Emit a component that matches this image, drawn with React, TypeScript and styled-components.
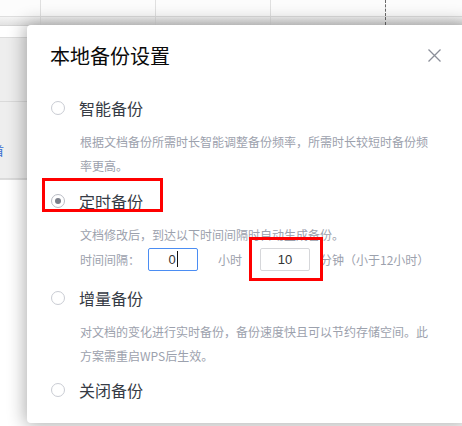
import React from "react";
import styled, { createGlobalStyle } from "styled-components";

const Global = createGlobalStyle`
  html, body { margin: 0; padding: 0; background: #ffffff; overflow: hidden; }
  body { font-family: "Noto Sans CJK SC", "Noto Sans", "Liberation Sans", sans-serif; }
  * { box-sizing: border-box; }
`;

const Page = styled.div`
  position: relative;
  width: 462px;
  height: 426px;
  overflow: hidden;
  background: #ffffff;
`;

/* ---------- spreadsheet behind ---------- */
const Sheet = styled.div`
  display: flex;
  flex-direction: column;
  width: 100%;
  height: 100%;
`;

const GridRow = styled.div<{ $h: number; $band?: boolean }>`
  display: grid;
  grid-template-columns: 41px 115px 115px 115px 1fr;
  height: ${(p) => p.$h}px;
  background: ${(p) => (p.$band ? "linear-gradient(#f4f4f4, #e2e2e2)" : "#fcfcfc")};
  border-bottom: 1px solid ${(p) => (p.$band ? "#d4d4d4" : "#dedede")};
`;

const GridCell = styled.div<{ $dashed?: boolean }>`
  border-right: 1px ${(p) => (p.$dashed ? "dashed #6a6a6a" : "solid #e0e0e0")};
`;

const SideBody = styled.div`
  display: flex;
  flex-direction: column;
  width: 27px;
  padding-top: 11px;
`;

const SidePanel = styled.div`
  height: 143px;
  display: flex;
  flex-direction: column;
  background: #eeeeee;
  border-top: 1px solid #dcdcdc;
  border-bottom: 1px solid #dcdcdc;
`;

const SideRow = styled.div<{ $h: number }>`
  height: ${(p) => p.$h}px;
  border-bottom: 1px solid #dadada;
  display: flex;
  align-items: flex-start;
  padding-top: 41px;
  overflow: hidden;
`;

const SideGlyph = styled.span`
  font-size: 12px;
  line-height: 16px;
  color: #3b6fd0;
  margin-left: -8px;
`;

/* ---------- dialog ---------- */
const Dialog = styled.div`
  position: absolute;
  left: 27px;
  top: 25px;
  width: 440px;
  height: 398px;
  background: #ffffff;
  border-radius: 4px;
  box-shadow: 0 0 18px 2px rgba(0, 0, 0, 0.32);
  padding: 17px 25px 0 23px;
  display: flex;
  flex-direction: column;
`;

const Header = styled.div`
  display: flex;
  align-items: center;
  justify-content: space-between;
  height: 28px;
`;

const Title = styled.h1`
  margin: 0;
  font-size: 20px;
  font-weight: 400;
  line-height: 28px;
  color: #0a0a0a;
`;

const CloseButton = styled.button`
  width: 16px;
  height: 16px;
  padding: 0;
  border: none;
  background: transparent;
  display: flex;
  align-items: center;
  justify-content: center;
  margin-top: -2px;
`;

const Body = styled.div`
  margin-top: 26px;
  display: flex;
  flex-direction: column;
`;

const Option = styled.div<{ $gapAfter: number }>`
  display: flex;
  flex-direction: column;
  margin-bottom: ${(p) => p.$gapAfter}px;
`;

const OptionRow = styled.label`
  display: flex;
  align-items: center;
  height: 24px;
`;

const Radio = styled.span<{ $checked?: boolean }>`
  width: 14px;
  height: 14px;
  margin-left: 1px;
  border-radius: 50%;
  border: 1px solid ${(p) => (p.$checked ? "#b9bcc4" : "#c9ccd3")};
  background: #ffffff;
  display: flex;
  align-items: center;
  justify-content: center;
  &::after {
    content: "";
    display: ${(p) => (p.$checked ? "block" : "none")};
    width: 6px;
    height: 6px;
    border-radius: 50%;
    background: #7b7f89;
  }
`;

const OptionLabel = styled.span`
  margin-left: 14px;
  font-size: 16px;
  line-height: 24px;
  color: #363b45;
`;

const Desc = styled.p`
  margin: 10px 0 0 30px;
  width: 352px;
  font-size: 12px;
  line-height: 24px;
  color: #9ca1ad;
`;

const IntervalRow = styled.div`
  display: flex;
  align-items: center;
  height: 24px;
  margin-left: 30px;
  font-size: 12px;
  color: #9ca1ad;
`;

const Unit = styled.span<{ $ml: number }>`
  margin-left: ${(p) => p.$ml}px;
  white-space: nowrap;
`;

const NumberBox = styled.div<{ $focused?: boolean }>`
  width: 50px;
  height: 23px;
  margin-left: ${(p) => (p.$focused ? 8 : 18)}px;
  border: 1px solid ${(p) => (p.$focused ? "#4b8df3" : "#d6d7da")};
  border-radius: 2px;
  display: flex;
  align-items: center;
  justify-content: center;
  font-family: "Liberation Sans", "Noto Sans", sans-serif;
  font-size: 13px;
  color: #333333;
`;

const Caret = styled.span`
  display: inline-block;
  width: 1px;
  height: 16px;
  background: #111111;
  margin-left: 1px;
`;

const Annotation = styled.div<{ $x: number; $y: number; $w: number; $h: number }>`
  position: absolute;
  left: ${(p) => p.$x}px;
  top: ${(p) => p.$y}px;
  width: ${(p) => p.$w}px;
  height: ${(p) => p.$h}px;
  border: 3px solid #ff0000;
  pointer-events: none;
`;

const CloseIcon = () => (
  <svg width="13" height="13" viewBox="0 0 13 13">
    <path d="M0.5 0.5 L12.5 12.5 M12.5 0.5 L0.5 12.5" stroke="#8b8f99" strokeWidth="1.3" fill="none" />
  </svg>
);

export default function App() {
  return (
    <Page>
      <Global />
      <Sheet>
        <GridRow $h={17}>
          <GridCell />
          <GridCell />
          <GridCell />
          <GridCell $dashed />
          <div />
        </GridRow>
        <GridRow $h={9} $band>
          <GridCell />
          <GridCell />
          <GridCell />
          <GridCell $dashed />
          <div />
        </GridRow>
        <SideBody>
          <SidePanel>
            <SideRow $h={64} />
            <SideRow $h={78}>
              <SideGlyph>首</SideGlyph>
            </SideRow>
          </SidePanel>
        </SideBody>
      </Sheet>

      <Dialog>
        <Header>
          <Title>本地备份设置</Title>
          <CloseButton aria-label="关闭">
            <CloseIcon />
          </CloseButton>
        </Header>

        <Body>
          <Option $gapAfter={11}>
            <OptionRow>
              <Radio />
              <OptionLabel>智能备份</OptionLabel>
            </OptionRow>
            <Desc>根据文档备份所需时长智能调整备份频率，所需时长较短时备份频率更高。</Desc>
          </Option>

          <Option $gapAfter={15}>
            <OptionRow>
              <Radio $checked />
              <OptionLabel>定时备份</OptionLabel>
            </OptionRow>
            <Desc>文档修改后，到达以下时间间隔时自动生成备份。</Desc>
            <IntervalRow>
              <span>时间间隔：</span>
              <NumberBox $focused>
                0<Caret />
              </NumberBox>
              <Unit $ml={20}>小时</Unit>
              <NumberBox>10</NumberBox>
              <Unit $ml={10}>分钟（小于12小时）</Unit>
            </IntervalRow>
          </Option>

          <Option $gapAfter={10}>
            <OptionRow>
              <Radio />
              <OptionLabel>增量备份</OptionLabel>
            </OptionRow>
            <Desc>对文档的变化进行实时备份，备份速度快且可以节约存储空间。此方案需重启WPS后生效。</Desc>
          </Option>

          <Option $gapAfter={0}>
            <OptionRow>
              <Radio />
              <OptionLabel>关闭备份</OptionLabel>
            </OptionRow>
          </Option>
        </Body>

        <Annotation $x={15} $y={153} $w={121} $h={34} />
        <Annotation $x={222} $y={212} $w={74} $h={44} />
      </Dialog>
    </Page>
  );
}
